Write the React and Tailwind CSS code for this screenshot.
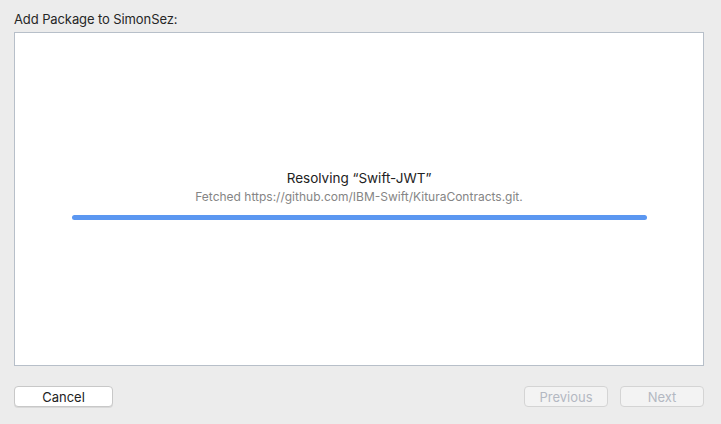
export default function App() {
  return (
    <div
      className="w-[721px] h-[424px] bg-[#ececec] flex flex-col px-[14px] pt-[5px] text-[#262626]"
      style={{ fontFamily: "Inter, 'Liberation Sans', sans-serif" }}
    >
      {/* Sheet title */}
      <div className="text-[13px] leading-[16px] h-[27px] flex items-center tracking-[-0.1px]">Add Package to SimonSez:</div>

      {/* Content panel */}
      <div className="w-[690px] h-[334px] bg-white border border-[#b7bfc9] flex flex-col items-center pt-[136px]">
        <div className="text-[13.5px] leading-[18px] text-[#222]">Resolving “Swift-JWT”</div>
        <div className="text-[12px] leading-[16px] text-[#858585] mt-[2px]">
          Fetched https://github.com/IBM-Swift/KituraContracts.git.
        </div>
        <div className="w-[575px] h-[5px] rounded-full bg-[#5b97f1] mt-[10px]" />
      </div>

      {/* Footer buttons */}
      <div className="w-[690px] flex items-center mt-[20px]">
        <button className="w-[99px] h-[21px] rounded-[4px] bg-white border border-[#c8c8c8] shadow-[0_1px_0_rgba(0,0,0,0.08)] text-[13px] leading-[16px] text-[#222]">
          Cancel
        </button>
        <div className="flex-1" />
        <button className="w-[84px] h-[21px] rounded-[4px] bg-[#f3f3f3] border border-[#d4d4d4] text-[13px] leading-[16px] text-[#b3b8c2]">
          Previous
        </button>
        <button className="w-[84px] h-[21px] ml-[12px] rounded-[4px] bg-[#f3f3f3] border border-[#d4d4d4] text-[13px] leading-[16px] text-[#b3b8c2]">
          Next
        </button>
      </div>
    </div>
  );
}
